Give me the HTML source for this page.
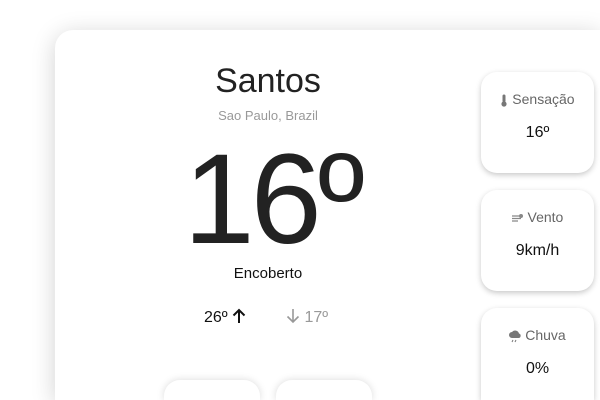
<!DOCTYPE html>
<html><head><style>
*{margin:0;padding:0;box-sizing:border-box}
html,body{width:600px;height:400px;overflow:hidden}
body{background:#fff;position:relative;font-family:"Liberation Sans",Arial,sans-serif;color:#222}
.main{position:absolute;left:55px;top:30px;width:545px;height:370px;background:#fff;border-radius:18px 0 0 0;box-shadow:0 4px 24px rgba(0,0,0,.18)}
.t{position:absolute;width:100%;text-align:center}
.side{position:absolute;left:481px;width:113px;height:101px;background:#fff;border-radius:16px;box-shadow:0 2px 6px rgba(0,0,0,.22);text-align:center}
.side .l{margin-top:19px;font-size:14px;color:#666;white-space:nowrap}
.side .v{margin-top:17px;font-size:16px;color:#111}
.bot{position:absolute;top:380px;width:96px;height:20px;background:#fff;border-radius:16px 16px 0 0;box-shadow:0 0 8px rgba(0,0,0,.15)}
svg{vertical-align:middle}
</style></head><body>
<div class="main"></div>
<div class="t" style="left:-32px;top:62px;font-size:34px;color:#222">Santos</div>
<div class="t" style="left:-32px;top:108px;font-size:13px;color:#999">Sao Paulo, Brazil</div>
<div class="t" style="left:-28px;top:135px;font-size:128px;line-height:130px;color:#222;letter-spacing:-4px">16º</div>
<div class="t" style="left:-32px;top:265px;font-size:15px;color:#111">Encoberto</div>
<div style="position:absolute;left:204px;top:309px;font-size:16px;color:#111">26º <svg width="14" height="16" viewBox="0 0 14 16" style="margin-top:-3px"><path d="M7 15V2M1.5 7.5L7 2l5.5 5.5" stroke="#111" stroke-width="2" fill="none"/></svg></div>
<div style="position:absolute;left:286px;top:309px;font-size:16px;color:#999"><svg width="14" height="16" viewBox="0 0 14 16" style="margin-top:-3px"><path d="M7 1v13M1.5 8.5L7 14l5.5-5.5" stroke="#999" stroke-width="1.6" fill="none"/></svg> 17º</div>
<div class="side" style="top:72px"><div class="l"><svg width="8" height="13" viewBox="0 0 8 13"><rect x="2.5" y="0.5" width="3" height="8" rx="1.5" fill="#777"/><circle cx="4" cy="10" r="2.6" fill="#777"/></svg> Sensação</div><div class="v">16º</div></div>
<div class="side" style="top:190px"><div class="l"><svg width="12" height="10" viewBox="0 0 12 10"><path d="M0 3h7M0 5.5h9M0 8h6" stroke="#888" stroke-width="1.3"/><circle cx="9" cy="3" r="2" fill="#888"/></svg> Vento</div><div class="v">9km/h</div></div>
<div class="side" style="top:308px;height:92px;border-radius:16px 16px 0 0"><div class="l"><svg width="12" height="13" viewBox="0 0 12 13"><path d="M3 8a3 3 0 0 1 0-6 4 4 0 0 1 7 1.5A2.3 2.3 0 0 1 9.5 8z" fill="#777"/><path d="M4 10l-1 2M7 10l-1 2" stroke="#777" stroke-width="1"/></svg> Chuva</div><div class="v">0%</div></div>
<div class="bot" style="left:164px"></div>
<div class="bot" style="left:276px"></div>
</body></html>
